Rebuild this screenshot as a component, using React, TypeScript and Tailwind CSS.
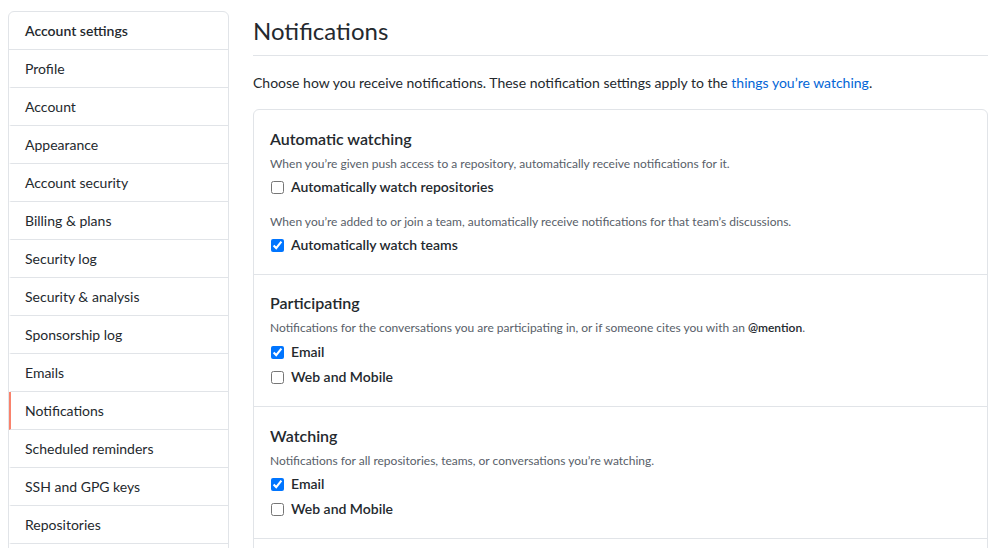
const menu = [
  'Profile',
  'Account',
  'Appearance',
  'Account security',
  'Billing & plans',
  'Security log',
  'Security & analysis',
  'Sponsorship log',
  'Emails',
  'Notifications',
  'Scheduled reminders',
  'SSH and GPG keys',
  'Repositories',
];

function Check({ label, checked }: { label: string; checked?: boolean }) {
  return (
    <label className="flex items-center h-5 text-sm font-semibold text-[#24292e]">
      <input type="checkbox" defaultChecked={checked} className="w-[13px] h-[13px] ml-px mr-[7px] accent-[#0075ff]" />
      {label}
    </label>
  );
}

export default function App() {
  return (
    <div className="flex h-[548px] overflow-hidden bg-white pl-2 pr-[11px] pt-[11px] font-['Lato',sans-serif] text-[#24292e]">
      {/* Sidebar */}
      <nav className="w-[221px] shrink-0 self-start rounded-md border border-[#e1e4e8]">
        <div className="h-[38px] flex items-center px-4 text-sm font-semibold border-b border-[#e1e4e8]">
          Account settings
        </div>
        {menu.map((item) => (
          <div
            key={item}
            className={`h-[38px] flex items-center px-4 text-sm border-b border-[#e1e4e8] border-l-2 ${
              item === 'Notifications' ? 'border-l-[#f9826c]' : 'border-l-transparent'
            }`}
          >
            <span className="-ml-0.5">{item}</span>
          </div>
        ))}
        <div className="h-[38px]" />
      </nav>

      {/* Main content */}
      <main className="flex-1 ml-6">
        <h2 className="text-2xl font-normal leading-[40px] pb-1 border-b border-[#e1e4e8]">Notifications</h2>
        <p className="text-sm mt-[17px] leading-[20px]">
          Choose how you receive notifications. These notification settings apply to the{' '}
          <a className="text-[#0366d6]">things you’re watching</a>.
        </p>

        <div className="mt-[16px] rounded-md border border-[#e1e4e8]">
          <section className="px-4 pt-[17px] pb-[19px] border-b border-[#e1e4e8]">
            <h3 className="text-base font-semibold leading-6">Automatic watching</h3>
            <p className="text-xs text-[#586069] leading-[18px] mt-1">
              When you’re given push access to a repository, automatically receive notifications for it.
            </p>
            <div className="mt-1">
              <Check label="Automatically watch repositories" />
            </div>
            <p className="text-xs text-[#586069] leading-[18px] mt-4">
              When you’re added to or join a team, automatically receive notifications for that team’s discussions.
            </p>
            <div className="mt-1">
              <Check label="Automatically watch teams" checked />
            </div>
          </section>

          <section className="px-4 pt-4 pb-[19px] border-b border-[#e1e4e8]">
            <h3 className="text-base font-semibold leading-6">Participating</h3>
            <p className="text-xs text-[#586069] leading-[18px] mt-1">
              Notifications for the conversations you are participating in, or if someone cites you with an{' '}
              <span className="font-semibold text-[#24292e]">@mention</span>.
            </p>
            <div className="mt-[5px] flex flex-col gap-[5px]">
              <Check label="Email" checked />
              <Check label="Web and Mobile" />
            </div>
          </section>

          <section className="px-4 pt-[17px] pb-[19px] border-b border-[#e1e4e8]">
            <h3 className="text-base font-semibold leading-6">Watching</h3>
            <p className="text-xs text-[#586069] leading-[18px] mt-1">
              Notifications for all repositories, teams, or conversations you’re watching.
            </p>
            <div className="mt-1 flex flex-col gap-[5px]">
              <Check label="Email" checked />
              <Check label="Web and Mobile" />
            </div>
          </section>

          <section className="h-[60px]" />
        </div>
      </main>
    </div>
  );
}
